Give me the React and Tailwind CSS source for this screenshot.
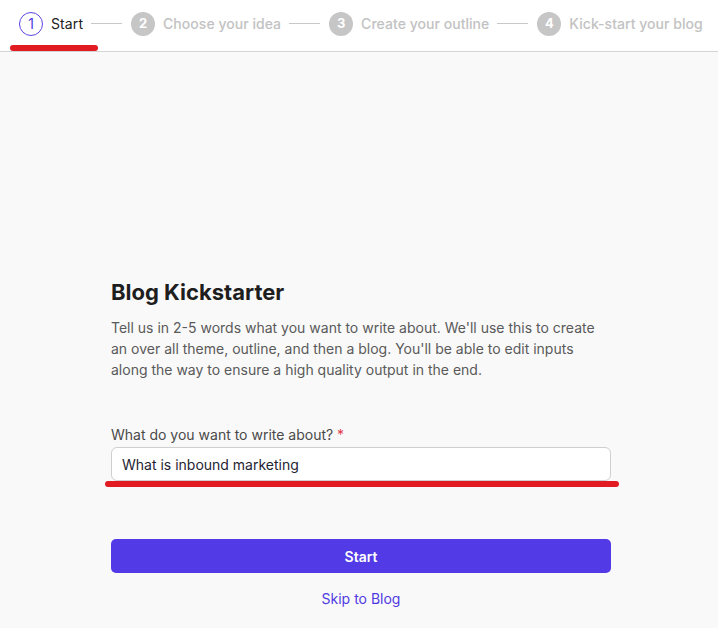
export default function App() {
  const steps = [
    { n: 2, label: "Choose your idea" },
    { n: 3, label: "Create your outline" },
    { n: 4, label: "Kick-start your blog" },
  ];
  return (
    <div className="min-h-[628px] w-full bg-[#f9f9f9] font-['Inter',sans-serif]">
      <header className="relative h-[52px] bg-white border-b border-[#d4d4d4] flex items-center pl-[19px] pb-[4px]">
        <div className="flex items-center">
          <div className="w-[24px] h-[24px] rounded-full border border-[#5b46e8] flex items-center justify-center text-[14px] text-[#4f3be3] leading-none">
            1
          </div>
          <span className="ml-[8px] text-[14px] text-[#222] tracking-[0.1px]">Start</span>
        </div>
        {steps.map((s) => (
          <div key={s.n} className="flex items-center">
            <div className="ml-[8px] mr-[9px] w-[31px] h-px bg-[#c8c8c8]" />
            <div className="w-[24px] h-[24px] rounded-full bg-[#c6c6c6] flex items-center justify-center text-[13px] font-bold text-white leading-none">
              {s.n}
            </div>
            <span className="ml-[8px] text-[14px] font-medium text-[#c2c2c2] tracking-[0.04px]">{s.label}</span>
          </div>
        ))}
        <div className="absolute left-[10px] top-[45px] w-[88px] h-[6px] rounded-full bg-[#e21b22]" />
      </header>

      <main className="w-[500px] ml-[111px] pt-[226px]">
        <h1 className="text-[22px] font-bold text-[#1e1e1e] leading-[28px]">Blog Kickstarter</h1>
        <p className="mt-[11px] text-[14px] leading-[21px] text-[#5a5a5a]">
          Tell us in 2-5 words what you want to write about. We'll use this to create an over all theme, outline, and then a blog. You'll be able to edit inputs along the way to ensure a high quality output in the end.
        </p>
        <label className="block mt-[45px] text-[14px] leading-[20px] text-[#4a4a4a]">
          What do you want to write about? <span className="text-[#e23a4a]">*</span>
        </label>
        <div className="relative mt-[2px]">
          <div className="h-[34px] w-full rounded-[6px] border border-[#cfcfcf] bg-white flex items-center px-[10px] text-[14px] text-[#1f2433]">
            What is inbound marketing
          </div>
          <div className="absolute left-[-6px] right-[-8px] top-[34px] h-[6px] rounded-full bg-[#e21b22]" />
        </div>
        <button className="mt-[58px] w-full h-[34px] rounded-[5px] bg-[#523ae6] text-white text-[14px] font-semibold">
          Start
        </button>
        <div className="mt-[15px] text-center text-[14px] text-[#4f3be3]">Skip to Blog</div>
      </main>
    </div>
  );
}
